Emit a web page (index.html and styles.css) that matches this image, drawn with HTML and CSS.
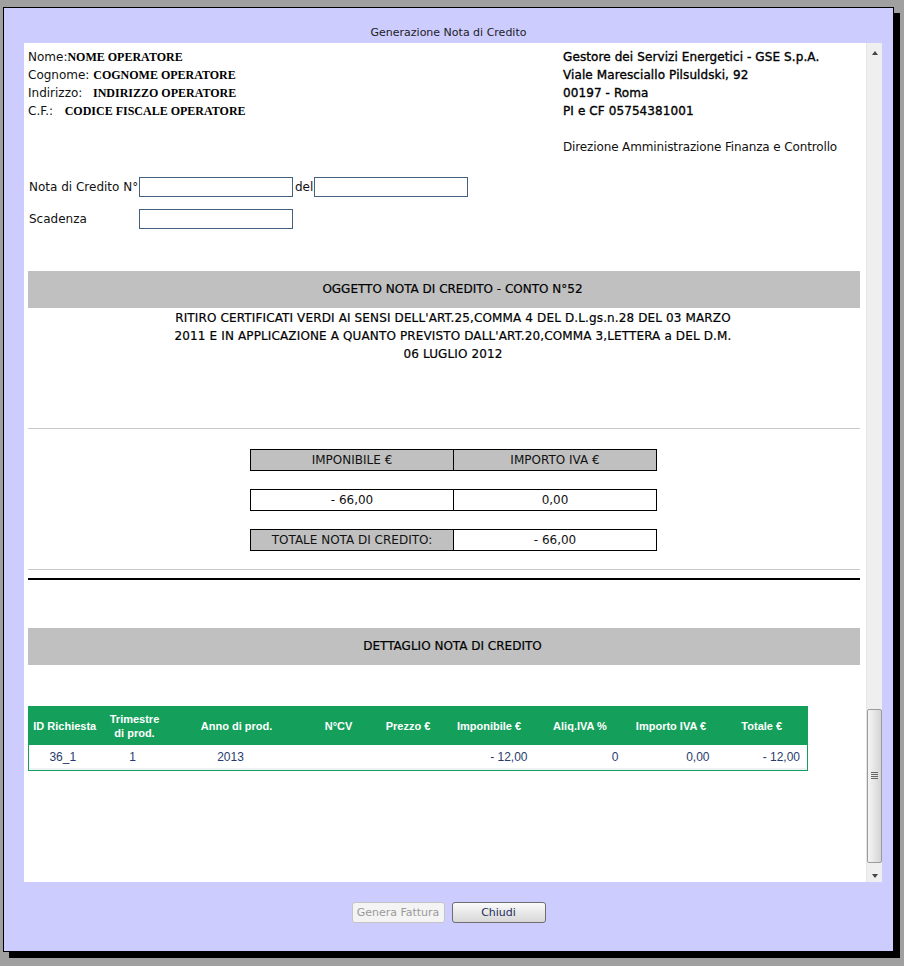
FILE: index.html
```html
<!DOCTYPE html>
<html lang="it">
<head>
<meta charset="utf-8">
<title>Generazione Nota di Credito</title>
<link rel="stylesheet" href="styles.css">
</head>
<body>
<div class="dialog">
  <div class="title">Generazione Nota di Credito</div>
  <div class="frame">
    <div class="doc">
      <div class="head">
        <div class="op">
          <div class="line"><span>Nome:</span><b class="serif">NOME OPERATORE</b></div>
          <div class="line"><span>Cognome: </span><b class="serif">COGNOME OPERATORE</b></div>
          <div class="line"><span class="gap3">Indirizzo:&nbsp; </span><b class="serif">INDIRIZZO OPERATORE</b></div>
          <div class="line"><span class="gap4">C.F.:&nbsp; </span><b class="serif">CODICE FISCALE OPERATORE</b></div>
        </div>
        <div class="gse">
          <div class="line strong">Gestore dei Servizi Energetici - GSE S.p.A.</div>
          <div class="line strong">Viale Maresciallo Pilsuldski, 92</div>
          <div class="line strong">00197 - Roma</div>
          <div class="line strong">PI e CF 05754381001</div>
          <div class="line dir">Direzione Amministrazione Finanza e Controllo</div>
        </div>
      </div>

      <div class="form">
        <div class="frow">
          <span class="flabel">Nota di Credito N°</span>
          <span class="input"></span>
          <span class="del">del</span>
          <span class="input"></span>
        </div>
        <div class="frow second">
          <span class="flabel">Scadenza</span>
          <span class="input"></span>
        </div>
      </div>

      <div class="band first">OGGETTO NOTA DI CREDITO - CONTO N°52</div>
      <p class="oggetto">RITIRO CERTIFICATI VERDI AI SENSI DELL'ART.25,COMMA 4 DEL D.L.gs.n.28 DEL 03 MARZO<br>2011 E IN APPLICAZIONE A QUANTO PREVISTO DALL'ART.20,COMMA 3,LETTERA a DEL D.M.<br>06 LUGLIO 2012</p>

      <div class="rule thin top"></div>

      <div class="totals">
        <div class="trow">
          <div class="cell grey">IMPONIBILE €</div>
          <div class="cell grey">IMPORTO IVA €</div>
        </div>
        <div class="trow">
          <div class="cell">- 66,00</div>
          <div class="cell">0,00</div>
        </div>
        <div class="trow">
          <div class="cell grey">TOTALE NOTA DI CREDITO:</div>
          <div class="cell">- 66,00</div>
        </div>
      </div>

      <div class="rule thin bottom"></div>
      <div class="rule thick"></div>

      <div class="band second">DETTAGLIO NOTA DI CREDITO</div>

      <table class="detail">
        <colgroup>
          <col class="c72"><col class="c68"><col class="c136"><col class="c68"><col class="c71">
          <col class="c91"><col class="c91"><col class="c91"><col class="c91">
        </colgroup>
        <thead>
          <tr>
            <th>ID Richiesta</th>
            <th>Trimestre<br>di prod.</th>
            <th>Anno di prod.</th>
            <th>N°CV</th>
            <th>Prezzo €</th>
            <th>Imponibile €</th>
            <th>Aliq.IVA %</th>
            <th>Importo IVA €</th>
            <th>Totale €</th>
          </tr>
        </thead>
        <tbody>
          <tr>
            <td class="ctr">36_1</td>
            <td class="ctr">1</td>
            <td class="ctr anno">2013</td>
            <td></td>
            <td></td>
            <td class="num">- 12,00</td>
            <td class="num">0</td>
            <td class="num">0,00</td>
            <td class="num">- 12,00</td>
          </tr>
        </tbody>
      </table>
    </div>

    <div class="scrollbar">
      <div class="sbtn"><span class="arrow up"></span></div>
      <div class="track">
        <div class="thumb"><span class="grip"></span></div>
      </div>
      <div class="sbtn"><span class="arrow down"></span></div>
    </div>
  </div>

  <div class="buttons">
    <button class="btn" disabled>Genera Fattura</button>
    <button class="btn primary">Chiudi</button>
  </div>
</div>
</body>
</html>
```
FILE: styles.css
```css
* { box-sizing: border-box; }

html, body {
  margin: 0;
  padding: 0;
}

body {
  background: #a0a0a0;
  width: 904px;
  height: 966px;
  overflow: hidden;
  font-family: "DejaVu Sans", sans-serif;
}

.dialog {
  margin: 7px 0 0 3px;
  width: 891px;
  height: 945px;
  border: 1px solid #000;
  background: #ccccff;
  box-shadow: 6px 6px 0 #000;
  display: flex;
  flex-direction: column;
}

.title {
  height: 35px;
  padding-top: 18px;
  font-size: 11px;
  line-height: 14px;
  text-align: center;
  color: #222;
}

.frame {
  margin: 0 11px 0 20px;
  height: 839px;
  background: #fff;
  display: flex;
}

.doc {
  flex: 1;
  padding: 5px 6px 0 4px;
  font-size: 12px;
  color: #111;
  overflow: hidden;
}

/* header */
.head {
  display: grid;
  grid-template-columns: 535px 1fr;
}

.line {
  height: 18px;
  line-height: 18px;
  white-space: nowrap;
}

.gap3 { margin-right: 3px; }
.gap4 { margin-right: 4px; }

.serif {
  font-family: "Liberation Serif", serif;
  font-size: 12px;
  font-weight: bold;
  color: #000;
}

.strong {
  font-size: 12px;
  color: #000;
  -webkit-text-stroke: 0.35px #000;
  letter-spacing: 0.1px;
}

.dir {
  margin-top: 18px;
  letter-spacing: -0.13px;
}

/* form */
.form {
  margin-top: 21px;
}

.frow {
  display: flex;
  align-items: center;
  height: 20px;
}

.frow.second {
  margin-top: 12px;
}

.flabel {
  width: 111px;
  padding-left: 1px;
}

.input {
  width: 154px;
  height: 20px;
  border: 1px solid #46607f;
  background: #fff;
}

.del {
  margin: 0 1px 0 2px;
}

/* bands */
.band {
  height: 37px;
  line-height: 37px;
  background: #c0c0c0;
  text-align: center;
  padding-left: 17px;
  color: #000;
  -webkit-text-stroke: 0.2px #000;
}

.band.first { margin-top: 42px; }
.band.second { margin-top: 48px; }

.oggetto {
  margin: 1px 0 0;
  padding-left: 18px;
  text-align: center;
  line-height: 18px;
  letter-spacing: 0.13px;
  color: #000;
  -webkit-text-stroke: 0.2px #000;
}

.rule.thin {
  height: 1px;
  background: #c8c8c8;
}

.rule.thin.top { margin-top: 65px; }
.rule.thin.bottom { margin-top: 18px; }

.rule.thick {
  margin-top: 8px;
  height: 2px;
  background: #000;
}

/* totals */
.totals {
  margin: 20px 0 0 222px;
  width: 407px;
}

.trow {
  display: flex;
  height: 22px;
  border: 1px solid #000;
  margin-bottom: 18px;
}

.trow:last-child { margin-bottom: 0; }

.cell {
  flex: 1;
  text-align: center;
  line-height: 20px;
  color: #111;
}

.cell:first-child {
  border-right: 1px solid #000;
}

.cell.grey {
  background: #c0c0c0;
}

/* detail table */
.detail {
  margin-top: 41px;
  width: 780px;
  border-collapse: collapse;
  table-layout: fixed;
  border: 1px solid #14a05a;
  font-family: "Liberation Sans", sans-serif;
}

.c72 { width: 72px; }
.c68 { width: 68px; }
.c136 { width: 136px; }
.c71 { width: 71px; }
.c91 { width: 91px; }

.detail th {
  background: #14a05a;
  color: #fff;
  font-size: 11px;
  font-weight: bold;
  line-height: 14px;
  height: 38px;
  padding: 0;
  text-align: center;
}

.detail td {
  height: 26px;
  font-size: 12px;
  color: #2a3a6c;
  padding: 0;
  box-shadow: inset 0 -2px 0 #eef1f6;
}

.detail td.ctr { text-align: center; padding-right: 4px; }
.detail td.anno { padding-right: 12px; }
.detail td.num { text-align: right; padding-right: 7px; }

/* scrollbar */
.scrollbar {
  width: 16px;
  background: #efefef;
  border-left: 1px solid #e6e6e6;
  display: flex;
  flex-direction: column;
}

.sbtn {
  height: 17px;
  display: flex;
  align-items: center;
  justify-content: center;
}

.arrow {
  width: 0;
  height: 0;
  border-left: 3.5px solid transparent;
  border-right: 3.5px solid transparent;
}

.arrow.up { border-bottom: 4px solid #444; margin-top: 2px; }
.arrow.down { border-top: 4px solid #444; margin-top: 4px; }

.track {
  flex: 1;
  display: flex;
  flex-direction: column;
  justify-content: flex-end;
}

.thumb {
  height: 154px;
  margin: 0 0 2px 0;
  border: 1px solid #9a9a9a;
  border-radius: 2px;
  background: linear-gradient(to right, #f4f4f4, #e2e2e2 60%, #d4d4d4);
  display: flex;
  align-items: center;
  justify-content: center;
}

.grip {
  width: 7px;
  height: 7px;
  background: repeating-linear-gradient(to bottom, #666 0, #666 1px, transparent 1px, transparent 2px);
  margin-bottom: 22px;
}

/* buttons */
.buttons {
  display: flex;
  justify-content: center;
  gap: 7px;
  margin-top: 20px;
}

.btn {
  width: 93px;
  height: 21px;
  padding: 0;
  font-family: "DejaVu Sans", sans-serif;
  font-size: 11px;
  border-radius: 3px;
}

.btn[disabled] {
  background: #f4f4f4;
  border: 1px solid #c4c4c4;
  color: #9a9a9a;
}

.btn.primary {
  width: 94px;
  background: linear-gradient(to bottom, #fbfbfb, #e6e6e6 55%, #d8d8d8);
  border: 1px solid #6e6e6e;
  color: #1d2f5a;
}
```
